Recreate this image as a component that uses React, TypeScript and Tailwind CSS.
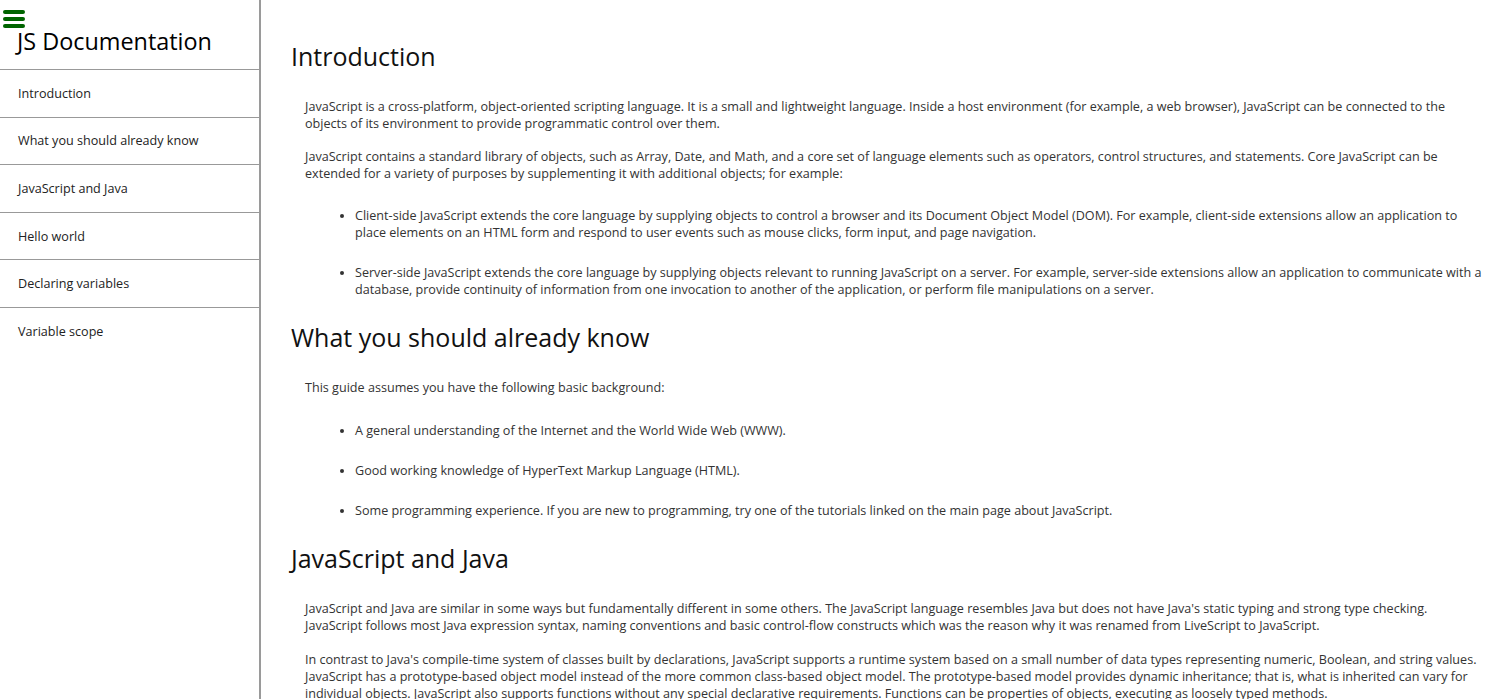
const navItems = [
  'Introduction',
  'What you should already know',
  'JavaScript and Java',
  'Hello world',
  'Declaring variables',
  'Variable scope',
];

function Section({ title, children }: { title: string; children: React.ReactNode }) {
  return (
    <section>
      <h2 className="text-[25px] leading-[36px] text-[#111] pl-[30px] mb-[24px]">{title}</h2>
      <div className="pl-[44px] text-[12.6px] leading-[17px] text-[#333]">{children}</div>
    </section>
  );
}

export default function App() {
  return (
    <div
      className="flex h-screen overflow-hidden bg-white"
      style={{ fontFamily: '"Open Sans", "Liberation Sans", sans-serif' }}
    >
      <nav className="relative w-[261px] shrink-0 border-r-2 border-[#9a9a9a] h-full">
        <div className="absolute left-[3px] top-[10px] flex flex-col gap-[3px]">
          <span className="block w-[22px] h-[4px] rounded-full bg-[#006400]" />
          <span className="block w-[22px] h-[4px] rounded-full bg-[#006400]" />
          <span className="block w-[22px] h-[4px] rounded-full bg-[#006400]" />
        </div>
        <header className="h-[70px] border-b border-[#999] pl-[17px] pt-[25px]">
          <h1 className="text-[23.4px] leading-[33px] text-black">JS Documentation</h1>
        </header>
        <ul>
          {navItems.map((item, i) => (
            <li
              key={item}
              className={
                'h-[47.6px] flex items-center pl-[18px] pt-[2px] text-[12.6px] text-[#222] ' +
                (i < navItems.length - 1 ? 'border-b border-[#999]' : '')
              }
            >
              {item}
            </li>
          ))}
        </ul>
      </nav>

      <main className="flex-1 pt-[38px] pr-[22px]">
        <Section title="Introduction">
          <p>
            JavaScript is a cross-platform, object-oriented scripting language. It is a small and lightweight language. Inside a host environment (for example, a web browser), JavaScript can be connected to the objects of its environment to provide programmatic control over them.
          </p>
          <p className="mt-[16px]">
            JavaScript contains a standard library of objects, such as Array, Date, and Math, and a core set of language elements such as operators, control structures, and statements. Core JavaScript can be extended for a variety of purposes by supplementing it with additional objects; for example:
          </p>
          <ul className="list-disc pl-[50px] mt-[25px] space-y-[23px]">
            <li>
              Client-side JavaScript extends the core language by supplying objects to control a browser and its Document Object Model (DOM). For example, client-side extensions allow an application to place elements on an HTML form and respond to user events such as mouse clicks, form input, and page navigation.
            </li>
            <li>
              Server-side JavaScript extends the core language by supplying objects relevant to running JavaScript on a server. For example, server-side extensions allow an application to communicate with a database, provide continuity of information from one invocation to another of the application, or perform file manipulations on a server.
            </li>
          </ul>
        </Section>

        <div className="h-[21px]" />
        <Section title="What you should already know">
          <p>This guide assumes you have the following basic background:</p>
          <ul className="list-disc pl-[50px] mt-[26px] space-y-[23px]">
            <li>A general understanding of the Internet and the World Wide Web (WWW).</li>
            <li>Good working knowledge of HyperText Markup Language (HTML).</li>
            <li>Some programming experience. If you are new to programming, try one of the tutorials linked on the main page about JavaScript.</li>
          </ul>
        </Section>

        <div className="h-[21px]" />
        <Section title="JavaScript and Java">
          <p>
            JavaScript and Java are similar in some ways but fundamentally different in some others. The JavaScript language resembles Java but does not have Java's static typing and strong type checking. JavaScript follows most Java expression syntax, naming conventions and basic control-flow constructs which was the reason why it was renamed from LiveScript to JavaScript.
          </p>
          <p className="mt-[17px]">
            In contrast to Java's compile-time system of classes built by declarations, JavaScript supports a runtime system based on a small number of data types representing numeric, Boolean, and string values. JavaScript has a prototype-based object model instead of the more common class-based object model. The prototype-based model provides dynamic inheritance; that is, what is inherited can vary for individual objects. JavaScript also supports functions without any special declarative requirements. Functions can be properties of objects, executing as loosely typed methods.
          </p>
        </Section>
      </main>
    </div>
  );
}
